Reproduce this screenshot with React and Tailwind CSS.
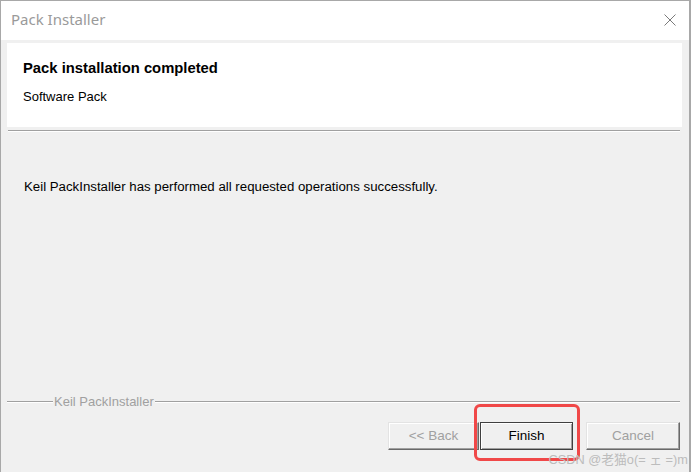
import React from "react";

function Button({ children, primary, disabled, className = "" }) {
  const base =
    "h-[28px] flex items-center justify-center bg-[#f0f0f0] text-[13.5px] leading-none";
  const look = primary
    ? "border border-[#404040] shadow-[inset_1px_1px_0_#ffffff,inset_-1px_-1px_0_#a0a0a0] text-black"
    : "border border-t-[#e3e3e3] border-l-[#e3e3e3] border-b-[#696969] border-r-[#696969] shadow-[inset_-1px_-1px_0_#a0a0a0,inset_1px_1px_0_#ffffff] text-[#a0a0a0]";
  return (
    <button type="button" disabled={disabled} className={`${base} ${look} ${className}`}>
      {children}
    </button>
  );
}

function Etched({ className = "" }) {
  return <div className={`h-[2px] border-t border-[#a0a0a0] border-b border-b-white ${className}`} />;
}

export default function App() {
  return (
    <div className="relative w-[691px] h-[472px] overflow-hidden bg-[#f0f0f0] border-l border-r-2 border-t border-[#a8a8a8] font-['Liberation_Sans',Arial,sans-serif] text-[13px] text-black">
      {/* title bar */}
      <div className="h-[39px] bg-white flex items-center justify-between pl-[10px] pr-[13px]">
        <span className="font-['Noto_Sans',sans-serif] text-[15px] text-[#9a9a9a] -mt-[2px]">Pack Installer</span>
        <svg width="12" height="12" viewBox="0 0 12 12" className="-mt-[1px]">
          <path d="M0.5 0.5 L11.5 11.5 M11.5 0.5 L0.5 11.5" stroke="#7a7a7a" strokeWidth="1" fill="none" />
        </svg>
      </div>

      {/* header panel */}
      <div className="mt-[3px] ml-[6px] mr-[7px] h-[84px] bg-white pl-[16px] pt-[16px]">
        <div className="font-bold text-[14.8px] leading-[18px]">Pack installation completed</div>
        <div className="mt-[12px] leading-[16px]">Software Pack</div>
      </div>
      <Etched className="mt-[3px] ml-[7px] mr-[9px]" />

      {/* message */}
      <div className="mt-[47px] pl-[23px] leading-[16px] text-[13.25px]">
        Keil PackInstaller has performed all requested operations successfully.
      </div>

      {/* group line */}
      <div className="mt-[199px] h-[16px] flex items-center pl-[6px] pr-[9px]">
        <Etched className="w-[46px]" />
        <span className="text-[#a0a0a0] leading-[16px] px-[1px]">Keil PackInstaller</span>
        <Etched className="flex-1" />
      </div>

      {/* buttons */}
      <div className="mt-[12px] flex justify-end pr-[9px]">
        <Button disabled className="w-[91px]">&lt;&lt; Back</Button>
        <Button primary className="w-[93px] ml-[1px]">Finish</Button>
        <Button disabled className="w-[94px] ml-[13px]">Cancel</Button>
      </div>

      {/* annotation */}
      <div className="absolute left-[473px] top-[403px] w-[106px] h-[57px] border-[3px] border-[#f04848] rounded-[6px]" />
      <div className="absolute right-[1px] top-[451px] text-[12.8px] leading-[16px] text-[#bcbcbc] font-['Liberation_Sans','Noto_Sans_CJK_SC',sans-serif] whitespace-nowrap">
        CSDN @老猫o(= ェ =)m
      </div>
    </div>
  );
}
